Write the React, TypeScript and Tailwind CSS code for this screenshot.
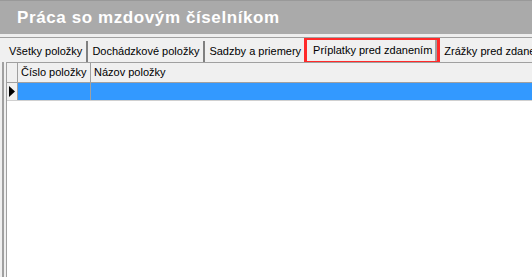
import React from "react";

const tabs = [
  "Všetky položky",
  "Dochádzkové položky",
  "Sadzby a priemery",
  "Príplatky pred zdanením",
  "Zrážky pred zdanením",
];

export default function App() {
  return (
    <div className="w-[532px] h-[277px] overflow-hidden bg-[#f0f0f0] font-['Liberation_Sans',Arial,sans-serif] text-[11px] text-black">
      {/* header */}
      <div className="h-[34px] bg-[#aaaaaa] border-t border-[#999999] flex items-center pl-[17px]">
        <span className="text-white font-bold text-[17px] tracking-[0.6px] leading-none">
          Práca so mzdovým číselníkom
        </span>
      </div>
      <div className="h-[3px] bg-[#eeeeee]" />
      <div className="h-px bg-[#a0a0a0]" />

      {/* tabs */}
      <div className="flex items-end h-[24px] pl-[5px] pt-[1px] whitespace-nowrap overflow-hidden">
        {tabs.map((t, i) => {
          const active = i === 3;
          return (
            <div
              key={t}
              className={
                active
                  ? "relative h-[23px] flex items-center pl-[5px] pr-[3px] bg-[#f0f0f0] border-r-2 border-[#a0a0a0] ml-[1px] mr-[3px]"
                  : "h-[21px] flex items-center px-[4px] border-r-2 border-[#808080]"
              }
            >
              {t}
              {active && (
                <div className="absolute -left-[4px] -top-[2px] -right-[5px] -bottom-[2px] border-[3px] border-[#ff2a2a]" />
              )}
            </div>
          );
        })}
      </div>

      {/* grid */}
      <div className="ml-[2px] h-[215px] border-l-2 border-[#a0a0a0] pl-[2px] bg-[#f0f0f0]">
        <div className="h-full border-l border-t border-[#a0a0a0] bg-white">
          <div className="flex h-[20px] bg-[#f0f0f0] border-b border-[#a0a0a0]">
            <div className="w-[11px] border-r border-[#a0a0a0]" />
            <div className="w-[73px] border-r border-[#a0a0a0] flex items-center pl-[3px]">Číslo položky</div>
            <div className="flex-1 flex items-center pl-[3px]">Názov položky</div>
          </div>
          <div className="flex h-[18px] border-b border-[#d0d0d0]">
            <div className="w-[11px] bg-[#f0f0f0] border-r border-[#a0a0a0] flex items-center">
              <svg width="7" height="11" viewBox="0 0 7 11" className="ml-[2px]">
                <path d="M0 0 L6 5.5 L0 11 Z" fill="#000" />
              </svg>
            </div>
            <div className="w-[73px] bg-[#3399ff] border-r border-[#a0a0a0]" />
            <div className="flex-1 bg-[#3399ff]" />
          </div>
        </div>
      </div>
    </div>
  );
}
